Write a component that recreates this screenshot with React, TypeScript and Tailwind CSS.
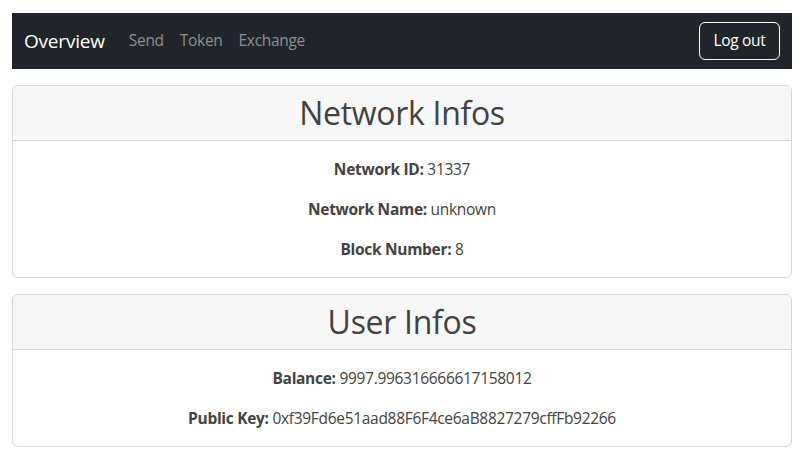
import React from "react";

const font = { fontFamily: '"Open Sans", "Noto Sans", sans-serif' };

function Row({ label, value, last }: { label: string; value: string; last?: boolean }) {
  return (
    <p className={`text-[15.5px] tracking-[-0.3px] leading-6 text-[#424242] ${last ? "" : "mb-4"}`}>
      <b className="font-bold">{label}</b> {value}
    </p>
  );
}

function Card({ title, children }: { title: string; children: React.ReactNode }) {
  return (
    <div className="rounded-md border border-[#d6d6d6] bg-white overflow-hidden">
      <div className="bg-[#f7f7f7] border-b border-[#d6d6d6] h-[55px] flex items-center justify-center">
        <h1 className="text-[32px] tracking-[-0.3px] leading-[40px] font-medium text-[#424242]">{title}</h1>
      </div>
      <div className="p-4 text-center">{children}</div>
    </div>
  );
}

export default function App() {
  return (
    <div className="bg-white min-h-[459px] w-[809px] pt-[13px]" style={font}>
      <div className="ml-3 w-[780px]">
        <nav className="bg-[#212529] h-[56px] flex items-center px-3">
          <span className="text-white text-[19px] tracking-[-0.2px] leading-[30px] mr-4 py-[5px]">Overview</span>
          <a className="text-[15.5px] tracking-[-0.3px] text-[#8d9094] px-2">Send</a>
          <a className="text-[15.5px] tracking-[-0.3px] text-[#8d9094] px-2">Token</a>
          <a className="text-[15.5px] tracking-[-0.3px] text-[#8d9094] px-2">Exchange</a>
          <button className="ml-auto h-[38px] w-[81px] border border-white rounded-md text-white text-[15.5px] tracking-[-0.3px]">
            Log out
          </button>
        </nav>
        <div className="mt-4">
          <Card title="Network Infos">
            <Row label="Network ID:" value="31337" />
            <Row label="Network Name:" value="unknown" />
            <Row label="Block Number:" value="8" last />
          </Card>
        </div>
        <div className="mt-4">
          <Card title="User Infos">
            <Row label="Balance:" value="9997.996316666617158012" />
            <Row label="Public Key:" value="0xf39Fd6e51aad88F6F4ce6aB8827279cffFb92266" last />
          </Card>
        </div>
      </div>
    </div>
  );
}
